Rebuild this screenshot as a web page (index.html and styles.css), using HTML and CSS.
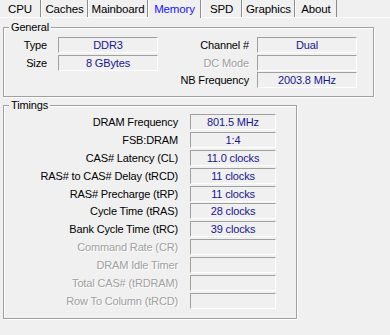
FILE: index.html
```html
<!DOCTYPE html>
<html lang="en">
<head>
    <meta charset="UTF-8" />
    <title>CPU-Z Memory</title>
    <link rel="stylesheet" href="styles.css">
</head>
<body>
    <div class="window">
        <div class="tabs">
            <div class="tab w-cpu">CPU</div>
            <div class="tab w-caches">Caches</div>
            <div class="tab w-mainboard">Mainboard</div>
            <div class="tab w-memory active">Memory</div>
            <div class="tab w-spd">SPD</div>
            <div class="tab w-graphics">Graphics</div>
            <div class="tab w-about">About</div>
        </div>

        <fieldset class="group general">
            <legend>General</legend>
            <div class="general-grid">
                <span class="lbl">Type</span>
                <span class="val">DDR3</span>
                <span class="lbl">Channel #</span>
                <span class="val">Dual</span>

                <span class="lbl">Size</span>
                <span class="val">8 GBytes</span>
                <span class="lbl off">DC Mode</span>
                <span class="val"></span>

                <span></span>
                <span></span>
                <span class="lbl">NB Frequency</span>
                <span class="val">2003.8 MHz</span>
            </div>
        </fieldset>

        <fieldset class="group timings">
            <legend>Timings</legend>
            <div class="timings-grid">
                <span class="lbl">DRAM Frequency</span>
                <span class="val">801.5 MHz</span>
                <span class="lbl">FSB:DRAM</span>
                <span class="val">1:4</span>
                <span class="lbl">CAS# Latency (CL)</span>
                <span class="val">11.0 clocks</span>
                <span class="lbl">RAS# to CAS# Delay (tRCD)</span>
                <span class="val">11 clocks</span>
                <span class="lbl">RAS# Precharge (tRP)</span>
                <span class="val">11 clocks</span>
                <span class="lbl">Cycle Time (tRAS)</span>
                <span class="val">28 clocks</span>
                <span class="lbl">Bank Cycle Time (tRC)</span>
                <span class="val">39 clocks</span>
                <span class="lbl off">Command Rate (CR)</span>
                <span class="val"></span>
                <span class="lbl off">DRAM Idle Timer</span>
                <span class="val"></span>
                <span class="lbl off">Total CAS# (tRDRAM)</span>
                <span class="val"></span>
                <span class="lbl off">Row To Column (tRCD)</span>
                <span class="val"></span>
            </div>
        </fieldset>
    </div>
</body>
</html>
```

FILE: styles.css
```css
body {
    margin: 0;
    background: #f0f0f0;
    font-family: "Liberation Sans", Arial, sans-serif;
    font-size: 11px;
    letter-spacing: -0.15px;
    color: #000;
}
.window {
    width: 390px;
    height: 335px;
    overflow: hidden;
}

/* tab strip */
.tabs {
    display: flex;
    height: 17px;
    border-bottom: 1px solid #fff;
}
.tab {
    box-sizing: border-box;
    height: 17px;
    line-height: 18px;
    font-size: 11.5px;
    text-align: center;
    border-left: 1px solid #fff;
    border-right: 1px solid #8c8c8c;
}
.tab.active {
    height: 18px;
    margin-bottom: -1px;
    background: #f0f0f0;
    color: #1414ff;
}
.w-cpu { width: 41px; border-left: none; }
.w-caches { width: 47px; }
.w-mainboard { width: 60px; }
.w-memory { width: 53px; }
.w-spd { width: 41px; }
.w-graphics { width: 53px; }
.w-about { width: 42px; }

/* group boxes */
.group {
    margin: 0 0 0 3px;
    padding: 0;
    border: 1px solid #a0a0a0;
    box-shadow: inset 1px 1px 0 #fff, 1px 1px 0 #fff;
}
.group legend {
    margin-left: 5px;
    padding: 0 2px;
    line-height: 13px;
    background: #f0f0f0;
}
.general {
    width: 369px;
    margin-top: 3px;
    padding: 3px 0 8px 0;
}
.timings {
    width: 292px;
    margin-top: 2px;
    padding: 2px 0 9px 0;
}

.general-grid {
    display: grid;
    grid-template-columns: 50px 100px 99px 100px;
    grid-auto-rows: 16px;
    row-gap: 1.5px;
    padding-left: 4px;
}
.general-grid .lbl:nth-child(4n+1) { padding-right: 11px; }
.general-grid .lbl:nth-child(4n+3) { padding-right: 8px; }

.timings-grid {
    display: grid;
    grid-template-columns: 186px 86px;
    grid-auto-rows: 16px;
    row-gap: 1.9px;
}
.timings-grid .lbl { padding-right: 12px; }

.lbl {
    line-height: 16px;
    text-align: right;
    white-space: nowrap;
}
.lbl.off {
    color: #a0a0a0;
    text-shadow: 1px 1px 0 #fff;
}
.val {
    box-sizing: border-box;
    height: 16px;
    line-height: 14px;
    text-align: center;
    color: #16168f;
    border-top: 1px solid #a0a0a0;
    border-left: 1px solid #a0a0a0;
    border-bottom: 1px solid #fff;
    border-right: 1px solid #fff;
}
```
